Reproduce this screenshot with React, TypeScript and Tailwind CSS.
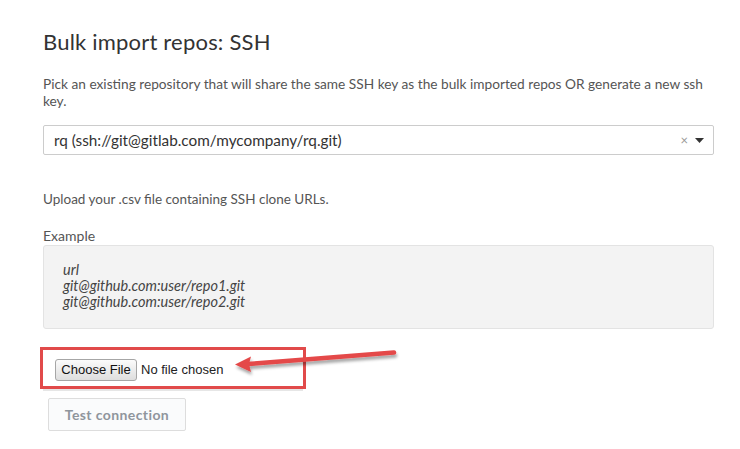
import React from "react";

export default function App() {
  return (
    <div className="relative w-[740px] h-[449px] bg-white overflow-hidden" style={{ fontFamily: "Lato, 'Noto Sans', sans-serif" }}>
      <div className="pl-[43px] pr-[26px] pt-[26px] flex flex-col">
        <h1 className="text-[22px] leading-[32px] text-[#333] font-normal tracking-[0.2px]">Bulk import repos: SSH</h1>
        <p className="mt-[17px] text-[13.7px] leading-[17px] text-[#555]">
          Pick an existing repository that will share the same SSH key as the bulk imported repos OR generate a new ssh key.
        </p>
        <div className="mt-[16px] h-[30px] border border-[#ccc] rounded-[2px] flex items-center pl-[10px] pr-[8px]">
          <span className="flex-1 text-[15.3px] text-[#333]">rq (ssh://git@gitlab.com/mycompany/rq.git)</span>
          <span className="text-[13px] text-[#999] mr-[7px] leading-none">×</span>
          <svg width="9" height="5" viewBox="0 0 9 5" className="mr-[1px]"><path d="M0 0 L9 0 L4.5 5 Z" fill="#333" /></svg>
        </div>
        <p className="mt-[36px] text-[13.5px] leading-[17px] text-[#555]">Upload your .csv file containing SSH clone URLs.</p>
        <div className="mt-[19px] text-[14px] leading-[17px] text-[#555]">Example</div>
        <div className="mt-[1px] h-[84px] bg-[#f3f3f3] border border-[#e3e3e3] rounded-[3px] pl-[19px] pt-[16px] text-[14.5px] leading-[16px] text-[#444] italic">
          <div>url</div>
          <div>git@github.com:user/repo1.git</div>
          <div>git@github.com:user/repo2.git</div>
        </div>
        <div className="mt-[18px] ml-[-3px] w-[266px] flex flex-col">
          <div className="h-[42px] border-[3px] border-[#e14a4a] flex items-center pl-[12px] pt-[3px]" style={{ fontFamily: "'Liberation Sans', Arial, sans-serif" }}>
            <span className="h-[22px] w-[82px] border border-[#a6a6a6] rounded-[3px] bg-gradient-to-b from-[#fbfbfb] to-[#dedede] text-[13px] text-[#111] flex items-center justify-center">Choose File</span>
            <span className="ml-[4px] text-[13px] text-[#222]">No file chosen</span>
          </div>
          <div className="mx-[3px] h-[2px] bg-[#e6e6e6]"></div>
        </div>
        <div className="mt-[7px] ml-[5px] w-[138px] h-[33px] border border-[#ddd] rounded-[2px] bg-[#fafbfc] flex items-center justify-center text-[14px] font-bold text-[#8f959c] tracking-[0.4px]">
          Test connection
        </div>
      </div>
      <svg className="absolute left-0 top-0" width="740" height="449" viewBox="0 0 740 449">
        <defs>
          <filter id="sh" x="-20%" y="-50%" width="140%" height="200%">
            <feDropShadow dx="1" dy="3" stdDeviation="1.8" floodColor="#000" floodOpacity="0.35" />
          </filter>
        </defs>
        <g filter="url(#sh)">
          <line x1="394" y1="352.5" x2="248" y2="364" stroke="#e44848" strokeWidth="4.5" strokeLinecap="round" />
          <path d="M235 364.5 L251 356.5 L249 364 L251 372 Z" fill="#e44848" />
        </g>
      </svg>
    </div>
  );
}
